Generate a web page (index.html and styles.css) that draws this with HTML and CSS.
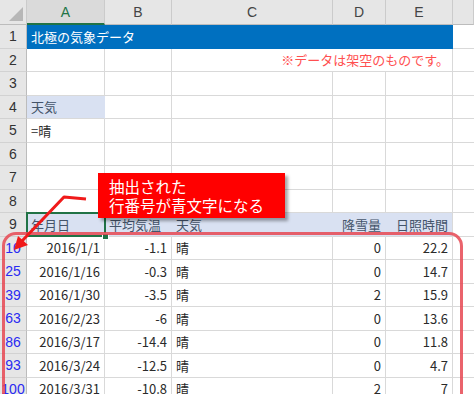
FILE: index.html
```html
<!DOCTYPE html>
<html lang="ja">
<head>
    <meta charset="UTF-8">
    <title>北極の気象データ</title>
    <link rel="stylesheet" href="styles.css">
</head>
<body>
    <div class="wrap">
        <div class="sheet">
            <!-- column headers -->
            <div class="ch corner"></div>
            <div class="ch act">A</div>
            <div class="ch">B</div>
            <div class="ch">C</div>
            <div class="ch">D</div>
            <div class="ch">E</div>
            <div class="ch"></div>

            <div class="rh">1</div>
            <div class="c title">北極の気象データ</div>
            <div class="c f"></div>

            <div class="rh">2</div>
            <div class="c"></div><div class="c"></div>
            <div class="c note r">※データは架空のものです。</div>
            <div class="c f"></div>

            <div class="rh">3</div>
            <div class="c"></div><div class="c"></div><div class="c"></div><div class="c"></div><div class="c"></div><div class="c f"></div>

            <div class="rh">4</div>
            <div class="c hd">天気</div><div class="c"></div><div class="c"></div><div class="c"></div><div class="c"></div><div class="c f"></div>

            <div class="rh">5</div>
            <div class="c">=晴</div><div class="c"></div><div class="c"></div><div class="c"></div><div class="c"></div><div class="c f"></div>

            <div class="rh">6</div>
            <div class="c"></div><div class="c"></div><div class="c"></div><div class="c"></div><div class="c"></div><div class="c f"></div>

            <div class="rh">7</div>
            <div class="c"></div><div class="c"></div><div class="c"></div><div class="c"></div><div class="c"></div><div class="c f"></div>

            <div class="rh">8</div>
            <div class="c"></div><div class="c"></div><div class="c"></div><div class="c"></div><div class="c"></div><div class="c f"></div>

            <div class="rh">9</div>
            <div class="c hd">年月日</div>
            <div class="c hd">平均気温</div>
            <div class="c hd">天気</div>
            <div class="c hd r">降雪量</div>
            <div class="c hd r last">日照時間</div>
            <div class="c f"></div>

            <div class="rh hit">10</div>
            <div class="c r">2016/1/1</div><div class="c r">-1.1</div><div class="c">晴</div><div class="c r">0</div><div class="c r">22.2</div><div class="c f"></div>

            <div class="rh hit">25</div>
            <div class="c r">2016/1/16</div><div class="c r">-0.3</div><div class="c">晴</div><div class="c r">0</div><div class="c r">14.7</div><div class="c f"></div>

            <div class="rh hit">39</div>
            <div class="c r">2016/1/30</div><div class="c r">-3.5</div><div class="c">晴</div><div class="c r">2</div><div class="c r">15.9</div><div class="c f"></div>

            <div class="rh hit">63</div>
            <div class="c r">2016/2/23</div><div class="c r">-6</div><div class="c">晴</div><div class="c r">0</div><div class="c r">13.6</div><div class="c f"></div>

            <div class="rh hit">86</div>
            <div class="c r">2016/3/17</div><div class="c r">-14.4</div><div class="c">晴</div><div class="c r">0</div><div class="c r">11.8</div><div class="c f"></div>

            <div class="rh hit">93</div>
            <div class="c r">2016/3/24</div><div class="c r">-12.5</div><div class="c">晴</div><div class="c r">0</div><div class="c r">4.7</div><div class="c f"></div>

            <div class="rh hit">100</div>
            <div class="c r">2016/3/31</div><div class="c r">-10.8</div><div class="c">晴</div><div class="c r">2</div><div class="c r">7</div><div class="c f"></div>
        </div>

        <!-- overlays -->
        <div class="active-cell"><span class="handle"></span></div>
        <div class="highlight"></div>
        <svg class="arrow" width="474" height="394" viewBox="0 0 474 394">
            <polyline points="86,199 64,197 22,241" fill="none" stroke="#f01a1a" stroke-width="3" stroke-linejoin="round"/>
            <polygon points="14,250 18,236 28,245" fill="#f01a1a"/>
        </svg>
        <div class="callout">抽出された<br>行番号が青文字になる</div>
    </div>
</body>
</html>
```

FILE: styles.css
```css
* {
    margin: 0;
    padding: 0;
    box-sizing: border-box;
}

body {
    width: 474px;
    height: 394px;
    overflow: hidden;
    background-color: #fff;
    font-family: "Noto Sans CJK JP", "Noto Sans", sans-serif;
    color: #2a2a2a;
}

.wrap {
    position: relative;
    width: 474px;
    height: 394px;
    overflow: hidden;
}

.sheet {
    display: grid;
    grid-template-columns: 27px 78px 67px 161px 53px 67px 21px;
    grid-template-rows: 25px repeat(16, 23.5px);
}

.ch {
    background-color: #e6e6e6;
    border-right: 1px solid #cbcbcb;
    border-bottom: 1px solid #bcbcbc;
    display: flex;
    align-items: center;
    justify-content: center;
    font-family: "Liberation Sans", sans-serif;
    font-size: 14px;
    color: #444;
}

.ch.act {
    background-color: #dadada;
    border-bottom: 2px solid #217346;
    color: #217346;
}

.corner {
    position: relative;
}

.corner::after {
    content: "";
    position: absolute;
    right: 3px;
    bottom: 3px;
    border-style: solid;
    border-width: 0 0 14px 14px;
    border-color: transparent transparent #b7b7b7 transparent;
}

.rh {
    background-color: #e6e6e6;
    border-right: 1px solid #bcbcbc;
    border-bottom: 1px solid #d2d2d2;
    display: flex;
    align-items: center;
    justify-content: center;
    font-family: "Liberation Sans", sans-serif;
    font-size: 14px;
    color: #333;
    white-space: nowrap;
    overflow: visible;
}

.rh.hit {
    color: #2a2af2;
}

.c {
    border-right: 1px solid #d9d9d9;
    border-bottom: 1px solid #d9d9d9;
    display: flex;
    align-items: center;
    padding: 0 4px;
    font-size: 13px;
    white-space: nowrap;
}

.c.r {
    justify-content: flex-end;
}

.c.f {
    border-right: none;
}

.title {
    grid-column: span 5;
    background-color: #0070c0;
    border-color: #0070c0;
    color: #fff;
}

.note {
    grid-column: span 3;
    color: #ff5050;
    padding-right: 3px;
}

.hd {
    background-color: #d9e1f2;
    border-right-color: #d9e1f2;
    color: #44546a;
}

.hd.last {
    border-right-color: #d9d9d9;
}

.active-cell {
    position: absolute;
    left: 26px;
    top: 212px;
    width: 80px;
    height: 25px;
    border: 2px solid #217346;
}

.handle {
    position: absolute;
    right: -5px;
    bottom: -5px;
    width: 7px;
    height: 7px;
    background-color: #217346;
    border: 1px solid #fff;
}

.highlight {
    position: absolute;
    left: 2px;
    top: 232px;
    width: 461px;
    height: 200px;
    border: 3px solid rgba(230, 72, 82, 0.85);
    border-radius: 14px;
}

.arrow {
    position: absolute;
    left: 0;
    top: 0;
}

.callout {
    position: absolute;
    left: 98px;
    top: 173px;
    width: 187px;
    height: 45px;
    background-color: #ff0000;
    color: #fff;
    font-size: 15.5px;
    line-height: 19px;
    padding: 4px 0 0 11px;
    box-shadow: 3px 3px 3px rgba(0, 0, 0, 0.35);
}
```
